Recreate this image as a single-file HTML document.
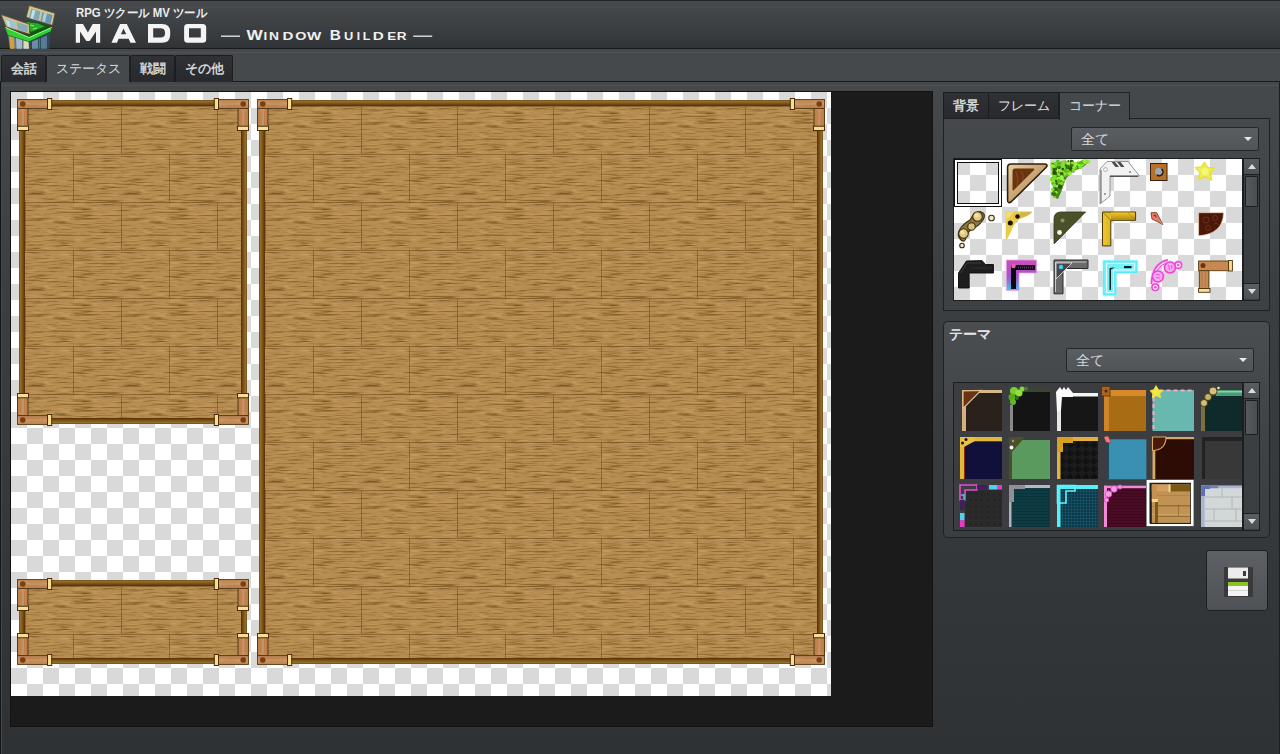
<!DOCTYPE html>
<html><head><meta charset="utf-8">
<style>
*{box-sizing:border-box}
html,body{margin:0;padding:0}
body{width:1280px;height:754px;overflow:hidden;position:relative;background:#2f3235;font-family:"Liberation Sans",sans-serif}
.abs{position:absolute}
#header{left:0;top:0;width:1280px;height:49px;background:linear-gradient(#46494c 0px,#45484b 5px,#4a4d50 6px,#44474a 8px,#3f4245 20px,#36393c 38px,#303336 47px);border-top:1px solid #222426;border-bottom:1px solid #17191b}
#tabbar{left:0;top:49px;width:1280px;height:33px;background:#46494c;border-bottom:1px solid #1a1c1e}
#tabbar:before{content:"";position:absolute;left:0;top:3px;width:100%;height:1px;background:#505357}
.tab{position:absolute;top:6px;height:27px;background:linear-gradient(#2f3134,#27292c);border:1px solid #1b1d1f;border-bottom:none;color:#d0d2d4;font-size:13px;font-weight:bold;line-height:25px;text-align:center;border-radius:2px 2px 0 0}
.tab.act{background:#46494c;color:#d8dadc;height:28px;border-color:#1f2123;font-weight:normal}
#body{left:0;top:82px;width:1280px;height:672px;background:linear-gradient(#46494c 0px,#3c3f42 200px,#313437 600px,#2f3235 672px);border-left:1px solid #141719;border-right:1px solid #1d1f21;box-shadow:inset 1px 0 0 #45484b}
#canvas{left:10px;top:91px;width:923px;height:636px;background:#1b1b1b;border:1px solid #121212}
#img{left:11px;top:92px;width:820px;height:604px}
.ptab{position:absolute;top:92px;height:27px;background:linear-gradient(#2f3134,#27292c);border:1px solid #1b1d1f;border-bottom:none;color:#d4d6d8;font-size:13px;line-height:25px;text-align:center;font-weight:bold}
.ptab.act{background:#46494c;height:27px;font-weight:normal;color:#e0e2e4}
#cbox{left:943px;top:118px;width:327px;height:193px;background:linear-gradient(#46494c,#3e4144);border:1px solid #1e2022}
#tbox{left:943px;top:321px;width:327px;height:217px;background:linear-gradient(#4b4e51,#3f4245 60%,#3b3e41);border:1px solid #1e2022;border-radius:5px}
.dd{position:absolute;height:24px;background:linear-gradient(#5a5e62,#505457);border:1px solid #24262a;border-radius:2px;color:#d6d8da;font-size:14px;line-height:22px;padding-left:9px}
.dd:after{content:"";position:absolute;right:6px;top:9px;border-left:4px solid transparent;border-right:4px solid transparent;border-top:4px solid #e8e8e8}
.sb{position:absolute;width:17px;background:#3c3f42;border:1px solid #1c1e20}
.sbb{position:absolute;left:0;width:15px;height:16px;background:linear-gradient(#5a5e62,#4c5054);border-bottom:1px solid #1c1e20}
.sbb.up:after{content:"";position:absolute;left:4px;top:5px;border-left:4px solid transparent;border-right:4px solid transparent;border-bottom:5px solid #dcdcdc}
.sbb.dn{border-top:1px solid #1c1e20;border-bottom:none}
.sbb.dn:after{content:"";position:absolute;left:4px;top:5px;border-left:4px solid transparent;border-right:4px solid transparent;border-top:5px solid #dcdcdc}
.thumb{position:absolute;left:1px;width:13px;background:linear-gradient(90deg,#55595c,#4a4e51);border:1px solid #1c1e20;border-radius:1px}
#save{left:1206px;top:550px;width:62px;height:61px;background:linear-gradient(#5d6165,#4e5256);border:1px solid #1d1f21;border-radius:3px}
</style></head>
<body>
<div id="header" class="abs"><svg class="abs" style="left:0;top:0" width="60" height="49" viewBox="0 0 60 49">
<polygon points="29.2,4.6 55,12.3 52.4,24.2 26.2,16.2" fill="#d8c890" stroke="#5a4a20" stroke-width="0.7"/>
<polygon points="31.2,7.6 40.5,10.3 38.6,20 29,17" fill="#7ea8b8"/>
<polygon points="42.3,10.9 52.6,14 50.6,23 40.4,20.4" fill="#6a98b0"/>
<polygon points="32.5,8.5 35.5,9.5 33,18 30.5,17.2" fill="#e0f0f8" opacity="0.75"/>
<polygon points="44,11.5 47,12.5 45,21 42,20.2" fill="#e0f0f8" opacity="0.6"/>
<polygon points="22,20 41,22 51.7,26.5 29,36" fill="#0e5a10"/>
<polygon points="26,21 38,22.5 45,25.5 31,31" fill="#2aa82a"/>
<path d="M30,24 L34,25 M33,28 L37,27" stroke="#8af07a" stroke-width="1"/>
<polygon points="1,13.6 29.2,23.2 29.8,33.2 6.3,25.9" fill="#d4c08c" stroke="#5a4a20" stroke-width="0.7"/>
<polygon points="4.5,17 15,20.5 16,28.5 7.5,25.5" fill="#a0c4d0"/>
<polygon points="16.5,21 27.5,24.5 28,31.5 17.8,28.8" fill="#88acbc"/>
<polygon points="6,19 9,20 10.5,25.5 8,25" fill="#e8f4f8" opacity="0.6"/>
<polygon points="5.3,26.5 29,36.5 51.7,26.5 50.4,31 29,41 8,34.5" fill="#34d030"/>
<path d="M5.3,26.5 L29,36.5 L51.7,26.5" stroke="#a0ff90" stroke-width="1" fill="none"/>
<path d="M8,34.5 L29,41 L50.4,31" stroke="#0a6a10" stroke-width="1.2" fill="none"/>
<polygon points="8,34.5 29,41 29.8,47.7 10,47.7" fill="#5a7a8a"/>
<polygon points="9,35 14,36.5 14.6,47.7 10,47.7" fill="#d0a040"/>
<polygon points="16,37 22,39 22,47.7 16.5,47.7" fill="#a0b8c8"/>
<polygon points="23.5,39.5 28.5,41 29,47.7 23.5,47.7" fill="#e0d8b0"/>
<polygon points="29,41 50.4,31 49.7,47.7 29.8,47.7" fill="#2a4a5a"/>
<polygon points="32,40.5 38,38 38,47.7 32,47.7" fill="#6a8aa8"/>
<polygon points="41,37 47,34.5 46.8,47.7 41,47.7" fill="#5a7a98"/>
<path d="M39.5,37.5 L39.5,47.7" stroke="#20a030" stroke-width="1.2"/>
</svg><div class="abs" style="left:76px;top:4px;color:#ececec;font-size:12px;font-weight:bold;line-height:16px;white-space:nowrap;transform:scaleX(0.95);transform-origin:0 0">RPG ツクール MV ツール</div>
<svg class="abs" style="left:0;top:0" width="460" height="48">
<path fill="#f4f4f4" fill-rule="evenodd" d="M75.8,41.8 L75.8,22.9 L83,22.9 L87.9,31.6 L92.7,22.9 L100.2,22.9 L100.2,41.8 L96,41.8 L96,30.4 L89.6,40 L86.3,40 L80,30.4 L80,41.8 Z
M111.4,41.8 L120.1,22.9 L126.8,22.9 L136,41.8 L130.4,41.8 L128.6,37.8 L118.6,37.8 L117,41.8 Z M120.9,33.2 L126.3,33.2 L123.5,27.6 Z
M148,22.9 L162,22.9 Q170.2,22.9 170.2,31 L170.2,33.7 Q170.2,41.8 162,41.8 L148,41.8 Z M153.2,27.3 L160.5,27.3 Q165,27.3 165,31.6 L165,32.3 Q165,36.6 160.5,36.6 L153.2,36.6 Z
M187.6,22.9 L202.7,22.9 Q206.2,22.9 206.2,26.4 L206.2,38.3 Q206.2,41.8 202.7,41.8 L187.6,41.8 Q184.1,41.8 184.1,38.3 L184.1,26.4 Q184.1,22.9 187.6,22.9 Z M189,27.3 L189,36.6 L200.8,36.6 L200.8,27.3 Z"/>
<rect x="221" y="34.5" width="19" height="1.4" fill="#e0e0e0"/>
<rect x="413.2" y="34.5" width="19" height="1.4" fill="#e0e0e0"/>
<g fill="#f0f0f0" font-family="Liberation Sans" font-weight="bold"><text x="246.5" y="38.9" font-size="13.8" textLength="16.2" lengthAdjust="spacingAndGlyphs">W</text><text x="263.4" y="38.9" font-size="11.4" textLength="3.7" lengthAdjust="spacingAndGlyphs">I</text><text x="269.0" y="38.9" font-size="11.4" textLength="10.0" lengthAdjust="spacingAndGlyphs">N</text><text x="282.4" y="38.9" font-size="11.4" textLength="10.9" lengthAdjust="spacingAndGlyphs">D</text><text x="295.3" y="38.9" font-size="11.4" textLength="11.2" lengthAdjust="spacingAndGlyphs">O</text><text x="307.1" y="38.9" font-size="11.4" textLength="14.3" lengthAdjust="spacingAndGlyphs">W</text><text x="329.7" y="38.9" font-size="13.8" textLength="11.1" lengthAdjust="spacingAndGlyphs">B</text><text x="343.9" y="38.9" font-size="11.4" textLength="9.3" lengthAdjust="spacingAndGlyphs">U</text><text x="356.8" y="38.9" font-size="11.4" textLength="3.3" lengthAdjust="spacingAndGlyphs">I</text><text x="362.8" y="38.9" font-size="11.4" textLength="7.6" lengthAdjust="spacingAndGlyphs">L</text><text x="372.7" y="38.9" font-size="11.4" textLength="11.0" lengthAdjust="spacingAndGlyphs">D</text><text x="387.3" y="38.9" font-size="11.4" textLength="8.9" lengthAdjust="spacingAndGlyphs">E</text><text x="396.7" y="38.9" font-size="11.4" textLength="9.8" lengthAdjust="spacingAndGlyphs">R</text></g>
</svg></div>
<div id="tabbar" class="abs">
 <div class="tab" style="left:1px;width:45px">会話</div>
 <div class="tab act" style="left:46px;width:84px">ステータス</div>
 <div class="tab" style="left:130px;width:45px">戦闘</div>
 <div class="tab" style="left:175px;width:58px">その他</div>
</div>
<div id="body" class="abs"></div>
<div class="abs" style="left:2px;top:85px;width:1276px;height:1px;background:#4e5154"></div>
<div id="canvas" class="abs"></div>
<div id="img" class="abs"><svg width="820" height="604" style="position:absolute;left:0;top:0">
<defs>
<filter id="grain" x="0" y="0" width="96" height="96" filterUnits="userSpaceOnUse" color-interpolation-filters="sRGB">
<feTurbulence type="fractalNoise" baseFrequency="0.04 0.6" numOctaves="3" seed="11" stitchTiles="stitch"/>
<feColorMatrix type="matrix" values="0 0 0 0 0.45  0 0 0 0 0.32  0 0 0 0 0.12  -2.4 0 0 0 1.22"/>
</filter>
<filter id="grain2" x="0" y="0" width="96" height="96" filterUnits="userSpaceOnUse" color-interpolation-filters="sRGB">
<feTurbulence type="fractalNoise" baseFrequency="0.06 0.5" numOctaves="2" seed="4" stitchTiles="stitch"/>
<feColorMatrix type="matrix" values="0 0 0 0 0.82  0 0 0 0 0.64  0 0 0 0 0.38  2.2 0 0 0 -1.15"/>
</filter>
<pattern id="chk" width="32" height="32" patternUnits="userSpaceOnUse">
<rect width="32" height="32" fill="#fff"/><rect width="16" height="16" fill="#d9d9d9"/><rect x="16" y="16" width="16" height="16" fill="#d9d9d9"/>
</pattern>
<pattern id="woodA" width="96" height="96" patternUnits="userSpaceOnUse" x="14" y="14"><rect width="96" height="96" fill="#b58c51"/><rect width="96" height="96" filter="url(#grain)"/><rect width="96" height="96" filter="url(#grain2)"/><rect x="0" y="0" width="96" height="1" fill="#5a3c14" opacity="0.42"/><rect x="0" y="48" width="96" height="1" fill="#5a3c14" opacity="0.42"/><rect x="0" y="0" width="1" height="48" fill="#5a3c14" opacity="0.42"/><rect x="48" y="48" width="1" height="48" fill="#5a3c14" opacity="0.42"/></pattern>
<pattern id="woodC" width="96" height="96" patternUnits="userSpaceOnUse" x="254" y="14"><rect width="96" height="96" fill="#b58c51"/><rect width="96" height="96" filter="url(#grain)"/><rect width="96" height="96" filter="url(#grain2)"/><rect x="0" y="0" width="96" height="1" fill="#5a3c14" opacity="0.42"/><rect x="0" y="48" width="96" height="1" fill="#5a3c14" opacity="0.42"/><rect x="0" y="0" width="1" height="48" fill="#5a3c14" opacity="0.42"/><rect x="48" y="48" width="1" height="48" fill="#5a3c14" opacity="0.42"/></pattern>
<linearGradient id="lineH" x1="0" y1="0" x2="0" y2="1">
<stop offset="0" stop-color="#6a4a14"/><stop offset="0.2" stop-color="#94702c"/><stop offset="0.55" stop-color="#80561a"/><stop offset="1" stop-color="#5a2e02"/></linearGradient>
<linearGradient id="lineHb" x1="0" y1="1" x2="0" y2="0">
<stop offset="0" stop-color="#6a4a14"/><stop offset="0.2" stop-color="#94702c"/><stop offset="0.55" stop-color="#80561a"/><stop offset="1" stop-color="#5a2e02"/></linearGradient>
<linearGradient id="lineV" x1="0" y1="0" x2="1" y2="0">
<stop offset="0" stop-color="#6a4a14"/><stop offset="0.2" stop-color="#94702c"/><stop offset="0.55" stop-color="#80561a"/><stop offset="1" stop-color="#5a2e02"/></linearGradient>
<linearGradient id="lineVr" x1="1" y1="0" x2="0" y2="0">
<stop offset="0" stop-color="#6a4a14"/><stop offset="0.2" stop-color="#94702c"/><stop offset="0.55" stop-color="#80561a"/><stop offset="1" stop-color="#5a2e02"/></linearGradient>
<linearGradient id="cbarH" x1="0" y1="0" x2="0" y2="1">
<stop offset="0" stop-color="#b88048"/><stop offset="0.45" stop-color="#cc9866"/><stop offset="1" stop-color="#b07848"/></linearGradient>
<linearGradient id="cbarV" x1="0" y1="0" x2="1" y2="0">
<stop offset="0" stop-color="#b47844"/><stop offset="0.5" stop-color="#cc9464"/><stop offset="1" stop-color="#b47844"/></linearGradient>
</defs>
<rect width="820" height="604" fill="url(#chk)"/>
<rect x="9" y="10" width="226" height="320" fill="url(#woodA)"/><rect x="40" y="8" width="164" height="6" fill="url(#lineH)"/><rect x="40" y="326" width="164" height="6" fill="url(#lineHb)"/><rect x="8" y="38" width="6" height="264" fill="url(#lineV)"/><rect x="230" y="38" width="6" height="264" fill="url(#lineVr)"/><g transform="translate(6,7) scale(1,1)">
<rect x="0.5" y="0.5" width="30.5" height="9" fill="url(#cbarH)" stroke="#5a3c16" stroke-width="0.9"/>
<rect x="0.5" y="9.5" width="10.5" height="18" fill="url(#cbarV)" stroke="#5c3a12" stroke-width="1"/>
<path d="M4,13 L4,26 M7.5,12 L7.5,26" stroke="#b07040" stroke-width="0.8" opacity="0.6"/><path d="M13,4 L26,4 M10,6.5 L22,6.5" stroke="#b07040" stroke-width="0.7" opacity="0.5"/><circle cx="5.8" cy="5" r="2.8" fill="#7a3c10"/>
<rect x="30.5" y="-0.5" width="4.2" height="11" fill="#f6dc94" stroke="#4a3008" stroke-width="1"/>
<rect x="0.5" y="27.2" width="11" height="4.3" fill="#f6dc94" stroke="#4a3008" stroke-width="1"/>
</g><g transform="translate(238,7) scale(-1,1)">
<rect x="0.5" y="0.5" width="30.5" height="9" fill="url(#cbarH)" stroke="#5a3c16" stroke-width="0.9"/>
<rect x="0.5" y="9.5" width="10.5" height="18" fill="url(#cbarV)" stroke="#5c3a12" stroke-width="1"/>
<path d="M4,13 L4,26 M7.5,12 L7.5,26" stroke="#b07040" stroke-width="0.8" opacity="0.6"/><path d="M13,4 L26,4 M10,6.5 L22,6.5" stroke="#b07040" stroke-width="0.7" opacity="0.5"/><circle cx="5.8" cy="5" r="2.8" fill="#7a3c10"/>
<rect x="30.5" y="-0.5" width="4.2" height="11" fill="#f6dc94" stroke="#4a3008" stroke-width="1"/>
<rect x="0.5" y="27.2" width="11" height="4.3" fill="#f6dc94" stroke="#4a3008" stroke-width="1"/>
</g><g transform="translate(6,333) scale(1,-1)">
<rect x="0.5" y="0.5" width="30.5" height="9" fill="url(#cbarH)" stroke="#5a3c16" stroke-width="0.9"/>
<rect x="0.5" y="9.5" width="10.5" height="18" fill="url(#cbarV)" stroke="#5c3a12" stroke-width="1"/>
<path d="M4,13 L4,26 M7.5,12 L7.5,26" stroke="#b07040" stroke-width="0.8" opacity="0.6"/><path d="M13,4 L26,4 M10,6.5 L22,6.5" stroke="#b07040" stroke-width="0.7" opacity="0.5"/><circle cx="5.8" cy="5" r="2.8" fill="#7a3c10"/>
<rect x="30.5" y="-0.5" width="4.2" height="11" fill="#f6dc94" stroke="#4a3008" stroke-width="1"/>
<rect x="0.5" y="27.2" width="11" height="4.3" fill="#f6dc94" stroke="#4a3008" stroke-width="1"/>
</g><g transform="translate(238,333) scale(-1,-1)">
<rect x="0.5" y="0.5" width="30.5" height="9" fill="url(#cbarH)" stroke="#5a3c16" stroke-width="0.9"/>
<rect x="0.5" y="9.5" width="10.5" height="18" fill="url(#cbarV)" stroke="#5c3a12" stroke-width="1"/>
<path d="M4,13 L4,26 M7.5,12 L7.5,26" stroke="#b07040" stroke-width="0.8" opacity="0.6"/><path d="M13,4 L26,4 M10,6.5 L22,6.5" stroke="#b07040" stroke-width="0.7" opacity="0.5"/><circle cx="5.8" cy="5" r="2.8" fill="#7a3c10"/>
<rect x="30.5" y="-0.5" width="4.2" height="11" fill="#f6dc94" stroke="#4a3008" stroke-width="1"/>
<rect x="0.5" y="27.2" width="11" height="4.3" fill="#f6dc94" stroke="#4a3008" stroke-width="1"/>
</g>
<rect x="9" y="490" width="226" height="80" fill="url(#woodA)"/><rect x="40" y="488" width="164" height="6" fill="url(#lineH)"/><rect x="40" y="566" width="164" height="6" fill="url(#lineHb)"/><rect x="8" y="518" width="6" height="24" fill="url(#lineV)"/><rect x="230" y="518" width="6" height="24" fill="url(#lineVr)"/><g transform="translate(6,487) scale(1,1)">
<rect x="0.5" y="0.5" width="30.5" height="9" fill="url(#cbarH)" stroke="#5a3c16" stroke-width="0.9"/>
<rect x="0.5" y="9.5" width="10.5" height="18" fill="url(#cbarV)" stroke="#5c3a12" stroke-width="1"/>
<path d="M4,13 L4,26 M7.5,12 L7.5,26" stroke="#b07040" stroke-width="0.8" opacity="0.6"/><path d="M13,4 L26,4 M10,6.5 L22,6.5" stroke="#b07040" stroke-width="0.7" opacity="0.5"/><circle cx="5.8" cy="5" r="2.8" fill="#7a3c10"/>
<rect x="30.5" y="-0.5" width="4.2" height="11" fill="#f6dc94" stroke="#4a3008" stroke-width="1"/>
<rect x="0.5" y="27.2" width="11" height="4.3" fill="#f6dc94" stroke="#4a3008" stroke-width="1"/>
</g><g transform="translate(238,487) scale(-1,1)">
<rect x="0.5" y="0.5" width="30.5" height="9" fill="url(#cbarH)" stroke="#5a3c16" stroke-width="0.9"/>
<rect x="0.5" y="9.5" width="10.5" height="18" fill="url(#cbarV)" stroke="#5c3a12" stroke-width="1"/>
<path d="M4,13 L4,26 M7.5,12 L7.5,26" stroke="#b07040" stroke-width="0.8" opacity="0.6"/><path d="M13,4 L26,4 M10,6.5 L22,6.5" stroke="#b07040" stroke-width="0.7" opacity="0.5"/><circle cx="5.8" cy="5" r="2.8" fill="#7a3c10"/>
<rect x="30.5" y="-0.5" width="4.2" height="11" fill="#f6dc94" stroke="#4a3008" stroke-width="1"/>
<rect x="0.5" y="27.2" width="11" height="4.3" fill="#f6dc94" stroke="#4a3008" stroke-width="1"/>
</g><g transform="translate(6,573) scale(1,-1)">
<rect x="0.5" y="0.5" width="30.5" height="9" fill="url(#cbarH)" stroke="#5a3c16" stroke-width="0.9"/>
<rect x="0.5" y="9.5" width="10.5" height="18" fill="url(#cbarV)" stroke="#5c3a12" stroke-width="1"/>
<path d="M4,13 L4,26 M7.5,12 L7.5,26" stroke="#b07040" stroke-width="0.8" opacity="0.6"/><path d="M13,4 L26,4 M10,6.5 L22,6.5" stroke="#b07040" stroke-width="0.7" opacity="0.5"/><circle cx="5.8" cy="5" r="2.8" fill="#7a3c10"/>
<rect x="30.5" y="-0.5" width="4.2" height="11" fill="#f6dc94" stroke="#4a3008" stroke-width="1"/>
<rect x="0.5" y="27.2" width="11" height="4.3" fill="#f6dc94" stroke="#4a3008" stroke-width="1"/>
</g><g transform="translate(238,573) scale(-1,-1)">
<rect x="0.5" y="0.5" width="30.5" height="9" fill="url(#cbarH)" stroke="#5a3c16" stroke-width="0.9"/>
<rect x="0.5" y="9.5" width="10.5" height="18" fill="url(#cbarV)" stroke="#5c3a12" stroke-width="1"/>
<path d="M4,13 L4,26 M7.5,12 L7.5,26" stroke="#b07040" stroke-width="0.8" opacity="0.6"/><path d="M13,4 L26,4 M10,6.5 L22,6.5" stroke="#b07040" stroke-width="0.7" opacity="0.5"/><circle cx="5.8" cy="5" r="2.8" fill="#7a3c10"/>
<rect x="30.5" y="-0.5" width="4.2" height="11" fill="#f6dc94" stroke="#4a3008" stroke-width="1"/>
<rect x="0.5" y="27.2" width="11" height="4.3" fill="#f6dc94" stroke="#4a3008" stroke-width="1"/>
</g>
<rect x="249" y="10" width="562" height="560" fill="url(#woodC)"/><rect x="280" y="8" width="500" height="6" fill="url(#lineH)"/><rect x="280" y="566" width="500" height="6" fill="url(#lineHb)"/><rect x="248" y="38" width="6" height="504" fill="url(#lineV)"/><rect x="806" y="38" width="6" height="504" fill="url(#lineVr)"/><g transform="translate(246,7) scale(1,1)">
<rect x="0.5" y="0.5" width="30.5" height="9" fill="url(#cbarH)" stroke="#5a3c16" stroke-width="0.9"/>
<rect x="0.5" y="9.5" width="10.5" height="18" fill="url(#cbarV)" stroke="#5c3a12" stroke-width="1"/>
<path d="M4,13 L4,26 M7.5,12 L7.5,26" stroke="#b07040" stroke-width="0.8" opacity="0.6"/><path d="M13,4 L26,4 M10,6.5 L22,6.5" stroke="#b07040" stroke-width="0.7" opacity="0.5"/><circle cx="5.8" cy="5" r="2.8" fill="#7a3c10"/>
<rect x="30.5" y="-0.5" width="4.2" height="11" fill="#f6dc94" stroke="#4a3008" stroke-width="1"/>
<rect x="0.5" y="27.2" width="11" height="4.3" fill="#f6dc94" stroke="#4a3008" stroke-width="1"/>
</g><g transform="translate(814,7) scale(-1,1)">
<rect x="0.5" y="0.5" width="30.5" height="9" fill="url(#cbarH)" stroke="#5a3c16" stroke-width="0.9"/>
<rect x="0.5" y="9.5" width="10.5" height="18" fill="url(#cbarV)" stroke="#5c3a12" stroke-width="1"/>
<path d="M4,13 L4,26 M7.5,12 L7.5,26" stroke="#b07040" stroke-width="0.8" opacity="0.6"/><path d="M13,4 L26,4 M10,6.5 L22,6.5" stroke="#b07040" stroke-width="0.7" opacity="0.5"/><circle cx="5.8" cy="5" r="2.8" fill="#7a3c10"/>
<rect x="30.5" y="-0.5" width="4.2" height="11" fill="#f6dc94" stroke="#4a3008" stroke-width="1"/>
<rect x="0.5" y="27.2" width="11" height="4.3" fill="#f6dc94" stroke="#4a3008" stroke-width="1"/>
</g><g transform="translate(246,573) scale(1,-1)">
<rect x="0.5" y="0.5" width="30.5" height="9" fill="url(#cbarH)" stroke="#5a3c16" stroke-width="0.9"/>
<rect x="0.5" y="9.5" width="10.5" height="18" fill="url(#cbarV)" stroke="#5c3a12" stroke-width="1"/>
<path d="M4,13 L4,26 M7.5,12 L7.5,26" stroke="#b07040" stroke-width="0.8" opacity="0.6"/><path d="M13,4 L26,4 M10,6.5 L22,6.5" stroke="#b07040" stroke-width="0.7" opacity="0.5"/><circle cx="5.8" cy="5" r="2.8" fill="#7a3c10"/>
<rect x="30.5" y="-0.5" width="4.2" height="11" fill="#f6dc94" stroke="#4a3008" stroke-width="1"/>
<rect x="0.5" y="27.2" width="11" height="4.3" fill="#f6dc94" stroke="#4a3008" stroke-width="1"/>
</g><g transform="translate(814,573) scale(-1,-1)">
<rect x="0.5" y="0.5" width="30.5" height="9" fill="url(#cbarH)" stroke="#5a3c16" stroke-width="0.9"/>
<rect x="0.5" y="9.5" width="10.5" height="18" fill="url(#cbarV)" stroke="#5c3a12" stroke-width="1"/>
<path d="M4,13 L4,26 M7.5,12 L7.5,26" stroke="#b07040" stroke-width="0.8" opacity="0.6"/><path d="M13,4 L26,4 M10,6.5 L22,6.5" stroke="#b07040" stroke-width="0.7" opacity="0.5"/><circle cx="5.8" cy="5" r="2.8" fill="#7a3c10"/>
<rect x="30.5" y="-0.5" width="4.2" height="11" fill="#f6dc94" stroke="#4a3008" stroke-width="1"/>
<rect x="0.5" y="27.2" width="11" height="4.3" fill="#f6dc94" stroke="#4a3008" stroke-width="1"/>
</g>
</svg></div>

<div class="ptab" style="left:943px;width:46px">背景</div>
<div class="ptab" style="left:988px;width:71px;font-weight:normal;color:#e2e4e6">フレーム</div>
<div id="cbox" class="abs"></div>
<div class="ptab act" style="left:1059px;width:71px;height:28px;border-color:#1f2123">コーナー</div>
<div class="dd" style="left:1071px;top:127px;width:188px">全て</div>
<div class="abs" style="left:953px;top:158px;width:290px;height:143px;background:#fff;border:1px solid #1c1e20;overflow:hidden"><svg width="288" height="141" style="position:absolute;left:0;top:0"><defs><pattern id="chk2" width="32" height="32" patternUnits="userSpaceOnUse"><rect width="32" height="32" fill="#fff"/><rect width="16" height="16" fill="#d9d9d9"/><rect x="16" y="16" width="16" height="16" fill="#d9d9d9"/></pattern></defs><rect width="288" height="141" fill="url(#chk2)"/><g transform="translate(0,0)"><rect x="0.5" y="0.5" width="47" height="47" fill="none" stroke="#111" stroke-width="1"/><rect x="2" y="2" width="44" height="44" fill="none" stroke="#fff" stroke-width="2"/><rect x="3.5" y="3.5" width="41" height="41" fill="none" stroke="#111" stroke-width="1"/></g><g transform="translate(48,0)"><defs><linearGradient id="brz" x1="0" y1="0" x2="1" y2="1"><stop offset="0" stop-color="#e8d0a0"/><stop offset="0.5" stop-color="#c8a470"/><stop offset="1" stop-color="#8a6a3a"/></linearGradient></defs><path d="M9,5 L43,5 Q46.5,5.5 44,8.5 L9.5,42.5 Q5.6,45.5 5.6,41 L5.6,8.5 Q5.6,5 9,5 Z" fill="url(#brz)" stroke="#2e200c" stroke-width="1.6"/><path d="M13,9.5 L31,9.5 Q33.5,9.5 31.5,11.5 L12.5,30.5 Q10.5,32.5 10.5,30 L10.5,12 Q10.5,9.5 13,9.5 Z" fill="#6a3410"/><path d="M14,13 q3,6 1,14 M19,12 q3,4 2,9" stroke="#8a4a20" stroke-width="1" fill="none"/></g><g transform="translate(96,0)"><path d="M3,3 L38,3 Q34,9 26,11 Q18,15 15,22 Q12,32 8,40 L3,38 Z" fill="#4a8a18"/><circle cx="10.7" cy="12.3" r="2.2" fill="#7ae028"/><circle cx="8.7" cy="6.9" r="1.0" fill="#98f038"/><circle cx="6.8" cy="12.3" r="1.7" fill="#3a7010"/><circle cx="2.6" cy="6.8" r="2.2" fill="#86e030"/><circle cx="8.7" cy="19.5" r="1.8" fill="#98f038"/><circle cx="38.4" cy="2.6" r="2.0" fill="#98f038"/><circle cx="4.9" cy="30.4" r="1.7" fill="#3a7010"/><circle cx="36.4" cy="2.7" r="2.3" fill="#86e030"/><circle cx="14.5" cy="9.9" r="1.1" fill="#5ab820"/><circle cx="17.4" cy="9.3" r="1.7" fill="#2a5008"/><circle cx="4.8" cy="9.8" r="1.9" fill="#98f038"/><circle cx="23.8" cy="8.5" r="2.3" fill="#7ae028"/><circle cx="4.1" cy="16.1" r="1.7" fill="#86e030"/><circle cx="17.4" cy="14.7" r="1.0" fill="#98f038"/><circle cx="17.8" cy="3.0" r="1.2" fill="#6ac820"/><circle cx="10.0" cy="16.2" r="2.0" fill="#5ab820"/><circle cx="19.2" cy="6.8" r="1.3" fill="#86e030"/><circle cx="4.3" cy="22.0" r="1.8" fill="#98f038"/><circle cx="17.2" cy="5.0" r="1.3" fill="#2a5008"/><circle cx="18.0" cy="10.0" r="1.9" fill="#a8f050"/><circle cx="2.1" cy="20.4" r="2.3" fill="#86e030"/><circle cx="3.3" cy="18.3" r="1.3" fill="#86e030"/><circle cx="21.7" cy="2.8" r="2.0" fill="#2a5008"/><circle cx="21.4" cy="7.2" r="2.2" fill="#86e030"/><circle cx="6.5" cy="11.6" r="2.1" fill="#a8f050"/><circle cx="21.8" cy="5.1" r="1.1" fill="#6ac820"/><circle cx="3.7" cy="8.8" r="1.3" fill="#6ac820"/><circle cx="19.0" cy="5.2" r="2.3" fill="#98f038"/><circle cx="17.7" cy="13.0" r="1.0" fill="#a8f050"/><circle cx="13.2" cy="20.1" r="1.0" fill="#2a5008"/><circle cx="9.1" cy="15.4" r="1.4" fill="#a8f050"/><circle cx="5.8" cy="31.4" r="1.9" fill="#2a5008"/><circle cx="16.7" cy="11.2" r="1.7" fill="#a8f050"/><circle cx="15.7" cy="8.0" r="1.6" fill="#2a5008"/><circle cx="10.0" cy="27.8" r="2.1" fill="#2a5008"/><circle cx="3.8" cy="35.1" r="1.5" fill="#2a5008"/><circle cx="3.0" cy="21.3" r="1.1" fill="#2a5008"/><circle cx="3.4" cy="22.9" r="1.9" fill="#86e030"/><circle cx="6.0" cy="33.2" r="1.8" fill="#86e030"/><circle cx="9.0" cy="24.1" r="1.3" fill="#7ae028"/><circle cx="6.5" cy="25.5" r="1.2" fill="#98f038"/><circle cx="28.5" cy="2.9" r="1.2" fill="#7ae028"/><circle cx="4.5" cy="37.6" r="1.6" fill="#7ae028"/><circle cx="11.6" cy="16.0" r="1.0" fill="#3a7010"/><circle cx="34.0" cy="4.1" r="1.5" fill="#a8f050"/><circle cx="5.3" cy="7.3" r="1.7" fill="#7ae028"/><circle cx="25.1" cy="8.6" r="1.6" fill="#a8f050"/><circle cx="3.8" cy="6.0" r="2.0" fill="#2a5008"/><circle cx="21.6" cy="5.4" r="1.6" fill="#3a7010"/><circle cx="3.3" cy="10.6" r="2.2" fill="#7ae028"/><circle cx="10.8" cy="15.0" r="1.7" fill="#2a5008"/><circle cx="17.6" cy="4.4" r="1.5" fill="#3a7010"/><circle cx="13.4" cy="21.2" r="1.4" fill="#98f038"/><circle cx="15.8" cy="12.4" r="1.6" fill="#86e030"/><circle cx="2.8" cy="22.8" r="2.2" fill="#98f038"/><circle cx="13.0" cy="6.9" r="1.5" fill="#a8f050"/><circle cx="3.7" cy="5.0" r="1.6" fill="#a8f050"/><circle cx="12.2" cy="12.4" r="1.6" fill="#98f038"/><circle cx="13.7" cy="17.7" r="2.3" fill="#5ab820"/><circle cx="2.7" cy="4.8" r="1.9" fill="#a8f050"/><circle cx="32.7" cy="2.6" r="1.9" fill="#98f038"/><circle cx="3.5" cy="7.6" r="2.2" fill="#3a7010"/><circle cx="2.6" cy="19.1" r="1.7" fill="#6ac820"/><circle cx="7.9" cy="5.5" r="1.9" fill="#3a7010"/><circle cx="4.3" cy="23.4" r="1.3" fill="#7ae028"/><circle cx="14.8" cy="14.5" r="2.0" fill="#a8f050"/><circle cx="5.3" cy="21.1" r="1.6" fill="#2a5008"/><circle cx="14.4" cy="19.0" r="1.0" fill="#3a7010"/><circle cx="13.2" cy="3.9" r="2.2" fill="#2a5008"/><circle cx="8.4" cy="2.9" r="1.9" fill="#7ae028"/><circle cx="4.8" cy="6.9" r="2.1" fill="#5ab820"/><circle cx="31.9" cy="5.0" r="2.2" fill="#98f038"/><circle cx="6.2" cy="9.4" r="1.0" fill="#3a7010"/><circle cx="3.8" cy="4.4" r="1.0" fill="#7ae028"/><circle cx="26.0" cy="4.6" r="1.8" fill="#7ae028"/><circle cx="12.0" cy="14.6" r="1.6" fill="#2a5008"/><circle cx="5.6" cy="21.0" r="1.7" fill="#a8f050"/><circle cx="4.1" cy="19.8" r="1.3" fill="#3a7010"/><circle cx="19.2" cy="12.0" r="1.1" fill="#3a7010"/><circle cx="7.7" cy="14.0" r="1.1" fill="#7ae028"/><circle cx="17.1" cy="5.4" r="1.0" fill="#5ab820"/><circle cx="23.3" cy="12.0" r="1.5" fill="#2a5008"/><circle cx="4.5" cy="23.2" r="1.4" fill="#98f038"/><circle cx="3.3" cy="24.8" r="1.9" fill="#5ab820"/><circle cx="2.6" cy="15.4" r="1.1" fill="#86e030"/><circle cx="16.9" cy="7.2" r="1.8" fill="#2a5008"/><circle cx="6.7" cy="26.9" r="1.4" fill="#a8f050"/><circle cx="6.5" cy="24.7" r="1.6" fill="#3a7010"/><circle cx="12.9" cy="15.3" r="0.9" fill="#3a7010"/><circle cx="6.5" cy="21.6" r="1.8" fill="#2a5008"/><circle cx="2.0" cy="20.8" r="1.8" fill="#86e030"/><circle cx="15.6" cy="12.2" r="1.8" fill="#5ab820"/><circle cx="10.7" cy="17.4" r="1.1" fill="#a8f050"/><circle cx="4.5" cy="34.7" r="1.8" fill="#7ae028"/><circle cx="13.1" cy="3.3" r="1.4" fill="#7ae028"/><circle cx="15.1" cy="9.2" r="2.2" fill="#5ab820"/><circle cx="11.0" cy="16.9" r="1.2" fill="#98f038"/><circle cx="2.8" cy="30.6" r="1.8" fill="#86e030"/><circle cx="4.0" cy="13.7" r="1.2" fill="#2a5008"/><circle cx="18.6" cy="12.7" r="1.1" fill="#3a7010"/><circle cx="9.4" cy="6.6" r="1.8" fill="#a8f050"/><circle cx="2.1" cy="4.4" r="1.5" fill="#7ae028"/><circle cx="2.8" cy="35.4" r="1.7" fill="#5ab820"/><circle cx="18.6" cy="11.5" r="1.0" fill="#6ac820"/><circle cx="4.3" cy="7.4" r="1.5" fill="#7ae028"/><circle cx="4.0" cy="20.3" r="1.8" fill="#7ae028"/><circle cx="3.2" cy="34.2" r="1.8" fill="#3a7010"/><circle cx="24.3" cy="3.9" r="1.1" fill="#98f038"/><circle cx="18.9" cy="5.2" r="0.9" fill="#2a5008"/><circle cx="23.6" cy="11.4" r="1.8" fill="#7ae028"/><circle cx="5.7" cy="17.2" r="2.1" fill="#3a7010"/><circle cx="25.3" cy="5.1" r="2.0" fill="#a8f050"/><circle cx="9.6" cy="17.1" r="1.0" fill="#3a7010"/><circle cx="9.0" cy="10.0" r="1.8" fill="#a8f050"/><circle cx="4.6" cy="17.4" r="1.2" fill="#a8f050"/><circle cx="6.9" cy="4.5" r="2.0" fill="#86e030"/><circle cx="7.7" cy="19.8" r="1.8" fill="#98f038"/><circle cx="11.8" cy="24.3" r="1.8" fill="#7ae028"/><circle cx="13.4" cy="8.6" r="2.0" fill="#86e030"/><circle cx="25.6" cy="9.1" r="1.1" fill="#6ac820"/><circle cx="30.4" cy="8.3" r="2.0" fill="#7ae028"/><circle cx="3.2" cy="3.1" r="1.4" fill="#a8f050"/><circle cx="4.1" cy="10.5" r="1.5" fill="#2a5008"/><circle cx="10.4" cy="9.9" r="1.8" fill="#98f038"/><circle cx="18.8" cy="5.8" r="1.1" fill="#98f038"/><circle cx="14.8" cy="4.5" r="1.1" fill="#2a5008"/><circle cx="12.3" cy="11.1" r="1.1" fill="#7ae028"/><circle cx="7.4" cy="4.5" r="2.3" fill="#7ae028"/><circle cx="6.3" cy="19.9" r="1.0" fill="#7ae028"/><circle cx="3.4" cy="14.7" r="2.1" fill="#86e030"/><circle cx="12.7" cy="10.1" r="1.3" fill="#2a5008"/><circle cx="11.9" cy="6.7" r="2.0" fill="#7ae028"/><circle cx="18.0" cy="15.2" r="2.1" fill="#6ac820"/><circle cx="18.0" cy="4.1" r="2.0" fill="#a8f050"/><circle cx="4.3" cy="34.0" r="1.4" fill="#6ac820"/><circle cx="5.2" cy="17.1" r="1.4" fill="#7ae028"/><circle cx="4.4" cy="26.2" r="2.0" fill="#7ae028"/><circle cx="15.3" cy="2.6" r="1.4" fill="#6ac820"/><circle cx="21.1" cy="8.8" r="2.0" fill="#7ae028"/><circle cx="21.5" cy="6.4" r="1.7" fill="#3a7010"/><circle cx="13.9" cy="3.7" r="1.4" fill="#86e030"/><circle cx="31.1" cy="3.6" r="1.9" fill="#5ab820"/><circle cx="2.9" cy="5.5" r="1.3" fill="#2a5008"/><circle cx="9.2" cy="8.5" r="1.8" fill="#3a7010"/><circle cx="22.3" cy="4.0" r="1.4" fill="#86e030"/><circle cx="18.5" cy="2.1" r="1.1" fill="#3a7010"/><circle cx="5.8" cy="10.5" r="1.1" fill="#2a5008"/><circle cx="12.5" cy="4.2" r="2.0" fill="#5ab820"/><circle cx="4.4" cy="35.3" r="2.0" fill="#3a7010"/><circle cx="9.9" cy="19.2" r="1.8" fill="#86e030"/><circle cx="11.6" cy="19.0" r="2.2" fill="#a8f050"/><circle cx="11.7" cy="5.4" r="1.4" fill="#86e030"/><circle cx="2.7" cy="6.6" r="1.7" fill="#98f038"/><circle cx="20.2" cy="9.2" r="2.0" fill="#2a5008"/><circle cx="32.6" cy="3.4" r="2.1" fill="#5ab820"/><circle cx="17.7" cy="8.0" r="2.2" fill="#3a7010"/><circle cx="4.5" cy="17.4" r="2.1" fill="#7ae028"/><circle cx="10.1" cy="5.4" r="1.1" fill="#5ab820"/><circle cx="19.9" cy="14.3" r="2.0" fill="#98f038"/><circle cx="8.6" cy="5.0" r="1.8" fill="#5ab820"/><circle cx="28.7" cy="6.1" r="1.4" fill="#98f038"/><circle cx="14.5" cy="14.8" r="1.0" fill="#86e030"/><circle cx="4.5" cy="13.7" r="2.3" fill="#2a5008"/><circle cx="7.6" cy="2.1" r="1.4" fill="#5ab820"/><circle cx="13.8" cy="4.5" r="0.9" fill="#6ac820"/><circle cx="2.0" cy="7.5" r="1.4" fill="#98f038"/><circle cx="8.7" cy="22.0" r="2.0" fill="#5ab820"/><circle cx="8.8" cy="15.5" r="1.6" fill="#7ae028"/><circle cx="34.7" cy="2.3" r="1.9" fill="#98f038"/><circle cx="13.4" cy="4.1" r="2.3" fill="#86e030"/></g><g transform="translate(144,0)"><path d="M2,10 L9,2.5 L30,2.5 L41.5,17 L12,17 L12,37 L2,45 Z" fill="#f2f2f2" stroke="#8a8a8a" stroke-width="0.9" stroke-linejoin="round"/><path d="M12,17.3 L40,17.3" stroke="#555" stroke-width="1.4"/><path d="M3,11 L3,44" stroke="#777" stroke-width="1.2"/><path d="M13.5,3 L17,3 L21,8 L17.5,8 Z M19,3 L22.5,3 L26.5,8 L23,8 Z" fill="#4a4a4a"/><circle cx="7.5" cy="10.5" r="2" fill="none" stroke="#aaa" stroke-width="0.8"/><circle cx="32" cy="13" r="0.9" fill="#777"/><circle cx="7" cy="35" r="0.9" fill="#777"/></g><g transform="translate(192,0)"><rect x="4.5" y="4.5" width="16.5" height="17" fill="#b87028" stroke="#3a2008" stroke-width="1"/><circle cx="12.7" cy="12.5" r="3.6" fill="#9aa8c0"/><path d="M15.5,10 A3.6,3.6 0 0 1 11,16" stroke="#222" stroke-width="1.6" fill="none"/></g><g transform="translate(240,0)"><path d="M10.5,3.5 L13.5,8.5 L20.5,9 L16,13.5 L17.5,21 L11,17.5 L4.5,20.5 L6,13.5 L1.5,8.5 L7.5,8 Z" fill="#f0f048" stroke="#e8e040" stroke-width="1.6" stroke-linejoin="round"/><circle cx="11" cy="12.5" r="3.5" fill="#f8f890" opacity="0.7"/></g><g transform="translate(0,48)"><g stroke="#3a2e10" stroke-width="1.1"><path d="M26,4.5 Q33,6 29,13 Q24,20 18,22 Q12,26 12,31 Q11,36 7,33 Q2,28 6,22 Q10,16 16,13 Q20,5 26,4.5 Z" fill="#8a7440"/><circle cx="23.5" cy="9.5" r="4.8" fill="#e4cc88"/><circle cx="17.5" cy="19.5" r="3.8" fill="#d8c078"/><circle cx="9.5" cy="26.5" r="4.8" fill="#e0c880"/><circle cx="37.5" cy="11" r="2.8" fill="#f0e8c8"/><circle cx="8" cy="38.5" r="2.3" fill="#f0e8c8"/></g><circle cx="22.5" cy="8.5" r="2" fill="#f4e4a8"/><circle cx="8.5" cy="25.5" r="2" fill="#f4e4a8"/></g><g transform="translate(48,48)"><path d="M3.7,4.5 L30.7,4.5 Q27,9 20,11 Q13,14 10,22 Q7,30 3.7,33.7 Z" fill="#e8cc48"/><path d="M4.5,5 L12,5 L4.5,13 Z" fill="#f4e088" opacity="0.8"/><path d="M18,5 L30,5 Q26,9 18,11 Z" fill="#d0b040" opacity="0.8"/><circle cx="15.5" cy="9.5" r="2.3" fill="#181008"/><circle cx="8.3" cy="16" r="2.5" fill="#181008"/></g><g transform="translate(96,48)"><path d="M11,5 L35.6,5 L4.5,36.5 Q4,37 4,36 L4,12 Q4,5 11,5 Z" fill="#4a5028" stroke="#30361a" stroke-width="0.8"/><circle cx="12.5" cy="13.5" r="2" fill="#8a9070"/><circle cx="9.5" cy="25.5" r="2.4" fill="#f4f4e8"/></g><g transform="translate(144,48)"><defs><linearGradient id="gld" x1="0" y1="0" x2="0" y2="1"><stop offset="0" stop-color="#f0c830"/><stop offset="1" stop-color="#b08810"/></linearGradient><linearGradient id="gldv" x1="0" y1="0" x2="1" y2="0"><stop offset="0" stop-color="#f0c830"/><stop offset="1" stop-color="#a07808"/></linearGradient></defs><path d="M4.5,5 L37.6,5 L37.6,13.3 L12.8,13.3 L12.8,38.9 L4.5,38.9 Z" fill="url(#gldv)" stroke="#4a3800" stroke-width="1"/><path d="M13,5.5 L37,5.5 L37,13 L13,13 Z" fill="url(#gld)"/><path d="M5,5.5 L12.8,13.3" stroke="#8a6a08" stroke-width="0.9"/><path d="M30,6 L37,13" stroke="#8a6a08" stroke-width="0.6" opacity="0.6"/></g><g transform="translate(192,48)"><path d="M5,5.8 L10.5,5.6 L17,17.5 Q12,15 6,12 Z" fill="#e88070" stroke="#7a3a20" stroke-width="0.9" stroke-linejoin="round"/><path d="M7,8 L10,7.5 L10.5,11 Z" fill="#c02010"/><path d="M12,12 L16.5,17" stroke="#b89070" stroke-width="1.2"/></g><g transform="translate(240,48)"><path d="M4.6,5.7 L29.6,5.7 Q29,27 4.6,28.7 Z" fill="#4a1808" stroke="#f8d8b0" stroke-width="0.6"/><g stroke="#7a3418" stroke-width="0.8" fill="none"><circle cx="12" cy="13" r="3"/><circle cx="21" cy="11" r="2.5"/><circle cx="14" cy="21" r="2.5"/><path d="M20,17 q3,-2 5,1"/></g></g><g transform="translate(0,96)"><path d="M4.5,18 L12.4,6 L28,5.6 L31.5,9.5 L39.4,9.5 L39.4,18 L15.2,18 L15.2,33 L4.5,33 Z" fill="#1e1e1e" stroke="#0a0a0a" stroke-width="0.9" stroke-linejoin="round"/><path d="M6.5,18 L13,8 L27,8" stroke="#3a3a3a" stroke-width="1" fill="none"/><path d="M17,13 L38,13" stroke="#333" stroke-width="0.8"/></g><g transform="translate(48,96)"><defs><linearGradient id="mg" x1="0" y1="0" x2="0" y2="1"><stop offset="0" stop-color="#c850b8"/><stop offset="0.55" stop-color="#a058c8"/><stop offset="1" stop-color="#40c8e8"/></linearGradient></defs><path d="M4.3,5 L34.7,5 L34.7,18 L17,18 L17,35.4 L4.3,35.4 Z" fill="url(#mg)" stroke="#f0a0f0" stroke-width="0.8"/><path d="M9,10 L33,10 L33,15 L14,15 L14,34 L9,34 Z" fill="#100810"/><path d="M16,12.5 L32,12.5" stroke="#603060" stroke-width="2" stroke-dasharray="1,1"/><circle cx="11.5" cy="11" r="2.3" fill="#e860a8"/></g><g transform="translate(96,96)"><path d="M4,5 L38,5 L38,13.5 L13,13.5 L13,38.8 L4,38.8 Z" fill="#6a6a6a" stroke="#2a2a2a" stroke-width="1"/><path d="M5.5,7 L36.5,7 M5.5,7 L5.5,37" stroke="#d0d0d0" stroke-width="0.9"/><path d="M6,8 L22,8 L6,24 Z" fill="#4a4450" stroke="#e8e8e8" stroke-width="0.8"/><circle cx="11" cy="12" r="2.2" fill="#30d8e8"/></g><g transform="translate(144,96)"><path d="M5.7,6.1 L38.9,6.1 L38.9,17.6 L17.8,17.6 L17.8,39.9 L5.7,39.9 Z" fill="none" stroke="#a0f8ff" stroke-width="3" opacity="0.6"/><path d="M5.7,6.1 L38.9,6.1 L38.9,17.6 L17.8,17.6 L17.8,39.9 L5.7,39.9 Z" fill="#78f0fa" stroke="#50e8f8" stroke-width="1"/><path d="M8.5,8.5 L36.5,8.5 L36.5,15 L15.5,15 L15.5,37.5 L8.5,37.5 Z" fill="none" stroke="#e8ffff" stroke-width="1"/><path d="M11.5,13 L17,12.5 L13,14.5 L13,35 L11.5,35 Z" fill="#082028"/><rect x="26" y="11" width="7.5" height="2.2" fill="#082028"/></g><g transform="translate(192,96)"><g fill="none" stroke="#f8b8f4" stroke-width="3.2" opacity="0.8"><path d="M5.5,29 Q6,8 22,5"/><circle cx="24" cy="12.5" r="5.5"/><circle cx="11.9" cy="21.4" r="5.5"/><circle cx="32.3" cy="10" r="3.3"/><circle cx="9.3" cy="32.3" r="3.3"/></g><g stroke="#e848d0" stroke-width="1.5" fill="#f8a8f0"><path d="M5.5,29 Q6,8 22,5" fill="none"/><path d="M9,27 Q9,12 20,8" fill="none" stroke-width="1"/><circle cx="24" cy="12.5" r="5.5"/><circle cx="11.9" cy="21.4" r="5.5"/><circle cx="32.3" cy="10" r="3.3" fill="#fde8fd"/><circle cx="9.3" cy="32.3" r="3.3" fill="#fde8fd"/></g><circle cx="32.3" cy="10" r="1.2" fill="#e848d0"/><circle cx="9.3" cy="32.3" r="1.2" fill="#e848d0"/><path d="M22.5,10 L23.5,15 M25.5,10 L26,14" stroke="#e848d0" stroke-width="0.9"/><path d="M10,19.5 L14,20 M10,22.5 L14,23" stroke="#e848d0" stroke-width="0.9"/></g><g transform="translate(240,96)"><rect x="4.6" y="6" width="30" height="9.7" fill="#c88850" stroke="#5c3a12" stroke-width="0.9"/><rect x="5.3" y="15.7" width="9.5" height="17.8" fill="#c48a58" stroke="#5c3a12" stroke-width="0.9"/><path d="M8,17 L8,32 M11.5,17 L11.5,32" stroke="#a87040" stroke-width="0.6"/><circle cx="9" cy="10.6" r="2.5" fill="#6a3410"/><rect x="34.6" y="5.5" width="3.8" height="10.5" fill="#f6dc94" stroke="#4a3008" stroke-width="0.9"/><rect x="4.6" y="33.5" width="11.4" height="3.8" fill="#f6dc94" stroke="#4a3008" stroke-width="0.9"/></g></svg></div>
<div class="sb" style="left:1243px;top:158px;height:143px">
 <div class="sbb up" style="top:0"></div>
 <div class="thumb" style="top:17px;height:31px"></div>
 <div class="sbb dn" style="top:124px"></div>
</div>

<div id="tbox" class="abs"></div>
<div class="abs" style="left:949px;top:326px;color:#e8e8e8;font-size:14px;font-weight:bold">テーマ</div>
<div class="dd" style="left:1066px;top:348px;width:188px">全て</div>
<div class="abs" style="left:953px;top:382px;width:290px;height:149px;background:#3b3d40;border:1px solid #1c1e20;overflow:hidden"><svg width="288" height="147" style="position:absolute;left:0;top:0"><defs><pattern id="dia" width="8" height="8" patternUnits="userSpaceOnUse" x="2" y="1"><path d="M4,0 L8,4 L4,8 L0,4 Z" fill="#111"/></pattern><pattern id="woodS" width="40" height="40" patternUnits="userSpaceOnUse"><rect width="40" height="40" fill="#c09254"/><rect x="0" y="6" width="40" height="1" fill="#8a6430" opacity="0.35"/><rect x="0" y="15" width="40" height="1" fill="#8a6430" opacity="0.3"/><rect x="0" y="26" width="40" height="1" fill="#8a6430" opacity="0.35"/><rect x="0" y="34" width="40" height="1" fill="#e0b880" opacity="0.4"/></pattern></defs><g transform="translate(-954,-383)"><rect x="966" y="393" width="36" height="38" fill="#2a211c"/><rect x="962" y="390" width="40" height="3" fill="#d8b888"/><rect x="962" y="390" width="4" height="41" fill="#d4b080"/><path d="M963,391 L981,390.5 L963,408.5 Z" fill="#6a3412" stroke="#dcbc88" stroke-width="1.2"/><rect x="1013" y="392" width="37" height="39" fill="#141414"/><rect x="1024" y="388.5" width="26" height="3.5" fill="#3a4632"/><rect x="1010" y="405" width="3" height="26" fill="#8a8a88"/><circle cx="1014" cy="391" r="4" fill="#78d030"/><circle cx="1019" cy="393" r="3.5" fill="#90e040"/><circle cx="1012" cy="397" r="3.5" fill="#5aa820"/><circle cx="1013" cy="402" r="3" fill="#60b828"/><circle cx="1022" cy="389" r="2.5" fill="#80d838"/><circle cx="1017" cy="398" r="2" fill="#3a7010"/><circle cx="1026" cy="388.5" r="2" fill="#5a8a30" opacity="0.7"/><rect x="1061" y="396" width="37" height="35" fill="#161616"/><rect x="1072" y="393" width="26" height="3.5" fill="#f4f4f4"/><rect x="1057" y="400" width="4" height="31" fill="#e8e8e8"/><path d="M1056,392 L1060,387 L1062,390 L1064,387 L1066,390 L1068,387 L1073,393 L1073,397 L1062,397 L1061,410 L1057,412 Z" fill="#fafafa"/><rect x="1109" y="396" width="37" height="35" fill="#a86c14"/><rect x="1104" y="390" width="42" height="6" fill="#d88a2a"/><rect x="1104" y="390" width="5" height="41" fill="#d08428"/><rect x="1101.5" y="386.5" width="8.5" height="9.5" fill="#a86420" stroke="#5a3008" stroke-width="0.8"/><circle cx="1106" cy="391" r="1.5" fill="#4a2808"/><rect x="1152.5" y="390" width="41.5" height="41" fill="#68b8b0"/><path d="M1152.5,390.5 L1194,390.5" stroke="#f4a8c8" stroke-width="2" stroke-dasharray="4,3"/><path d="M1153.5,390 L1153.5,431" stroke="#f4a8c8" stroke-width="2" stroke-dasharray="4,3"/><path d="M1156,386 L1158.5,390 L1162,390.5 L1159.5,393.5 L1160.5,397.5 L1156.5,395.5 L1152.5,397.5 L1153,393.5 L1150.5,390.5 L1154,390 Z" fill="#f4e848" stroke="#f0e040" stroke-width="1.2" stroke-linejoin="round"/><rect x="1205" y="396" width="37" height="35" fill="#0e2a2a"/><rect x="1216" y="390" width="26" height="6" fill="#4a9a78"/><rect x="1216" y="391" width="26" height="1.5" fill="#8ad0b0"/><rect x="1201" y="405" width="4" height="26" fill="#7a7040"/><g stroke="#3a2e10" stroke-width="0.8"><circle cx="1213" cy="391" r="4" fill="#d8c078"/><circle cx="1208" cy="397" r="3.5" fill="#c8b068"/><circle cx="1204" cy="403" r="3.5" fill="#d8c078"/><circle cx="1218.5" cy="388" r="1.8" fill="#e8e0b8"/></g><rect x="964.5" y="441" width="37.5" height="38" fill="#10103a"/><rect x="960" y="437" width="42" height="4" fill="#e0b838"/><rect x="960" y="437" width="4" height="42" fill="#e0b838"/><rect x="964" y="441" width="1" height="38" fill="#8a2a10"/><rect x="965" y="441" width="37" height="1" fill="#8a2a10"/><path d="M960,437 L975,437 L975,441 L964,447 L960,447 Z" fill="#e8c040"/><circle cx="966" cy="439.5" r="1.5" fill="#181008"/><circle cx="962.5" cy="443" r="1.5" fill="#181008"/><rect x="1012" y="440" width="38" height="39" fill="#5a9a5e"/><path d="M1009,437 L1025,437 L1012,452 L1012,479 L1009,479 Z" fill="#4a5028"/><circle cx="1011.5" cy="447.5" r="1.9" fill="#f8f8f0"/><circle cx="1013" cy="441" r="1.2" fill="#9a9a80"/><rect x="1060" y="441" width="38" height="38" fill="#1c1c1c"/><rect x="1060" y="441" width="38" height="38" fill="url(#dia)"/><rect x="1057" y="437" width="41" height="4" fill="#e0b040"/><rect x="1057" y="437" width="3.5" height="42" fill="#e0b040"/><path d="M1057,437 L1073,437 L1073,443 L1063,443 L1063,452 L1057,452 Z" fill="#d8a020"/><rect x="1107" y="439.3" width="39.4" height="40" fill="#3a90b0"/><rect x="1107" y="439.3" width="2" height="40" fill="#1a4a60"/><path d="M1104,437 L1108,436 L1111,443 L1106,442 Z" fill="#f08080" stroke="#a04040" stroke-width="0.6"/><rect x="1155" y="439" width="39" height="40" fill="#2e0c06"/><rect x="1152.5" y="437" width="41.5" height="2.2" fill="#d8a868"/><rect x="1152.5" y="437" width="2.8" height="42" fill="#d8a868"/><path d="M1152.5,437 L1166,437 Q1166,450 1152.5,450.5 Z" fill="#4a1a08" stroke="#d8a868" stroke-width="1.1"/><rect x="1205" y="441" width="37" height="38" fill="#383838"/><rect x="1202" y="437" width="40" height="4" fill="#222"/><rect x="1202" y="437" width="3" height="42" fill="#222"/><rect x="965" y="490" width="37" height="37" fill="#2a2a2a"/><g fill="#222"><circle cx="970" cy="494" r="1"/><circle cx="970" cy="500" r="1"/><circle cx="970" cy="506" r="1"/><circle cx="970" cy="512" r="1"/><circle cx="970" cy="518" r="1"/><circle cx="970" cy="524" r="1"/><circle cx="976" cy="494" r="1"/><circle cx="976" cy="500" r="1"/><circle cx="976" cy="506" r="1"/><circle cx="976" cy="512" r="1"/><circle cx="976" cy="518" r="1"/><circle cx="976" cy="524" r="1"/><circle cx="982" cy="494" r="1"/><circle cx="982" cy="500" r="1"/><circle cx="982" cy="506" r="1"/><circle cx="982" cy="512" r="1"/><circle cx="982" cy="518" r="1"/><circle cx="982" cy="524" r="1"/><circle cx="988" cy="494" r="1"/><circle cx="988" cy="500" r="1"/><circle cx="988" cy="506" r="1"/><circle cx="988" cy="512" r="1"/><circle cx="988" cy="518" r="1"/><circle cx="988" cy="524" r="1"/><circle cx="994" cy="494" r="1"/><circle cx="994" cy="500" r="1"/><circle cx="994" cy="506" r="1"/><circle cx="994" cy="512" r="1"/><circle cx="994" cy="518" r="1"/><circle cx="994" cy="524" r="1"/><circle cx="1000" cy="494" r="1"/><circle cx="1000" cy="500" r="1"/><circle cx="1000" cy="506" r="1"/><circle cx="1000" cy="512" r="1"/><circle cx="1000" cy="518" r="1"/><circle cx="1000" cy="524" r="1"/></g><path d="M960,485 L977,485 L977,490 L965,490 L965,500 L960,500 Z" fill="none" stroke="#e050d0" stroke-width="1.6"/><path d="M961,495 L964,495 L964,499" stroke="#40c8e8" stroke-width="1.5" fill="none"/><rect x="977" y="485" width="10" height="4.5" fill="#40205a"/><rect x="989" y="485" width="8" height="4.5" fill="#50d0f0"/><rect x="997" y="485" width="5" height="4.5" fill="#e040c0"/><rect x="960" y="500" width="4.5" height="10" fill="#40205a"/><rect x="960" y="513" width="4.5" height="7" fill="#50d0f0"/><rect x="960" y="520" width="4.5" height="7" fill="#e040c0"/><rect x="1011.5" y="488" width="38.5" height="39" fill="#0e3c44"/><rect x="1011.5" y="490" width="38.5" height="0.6" fill="#0a2e34"/><rect x="1011.5" y="493" width="38.5" height="0.6" fill="#0a2e34"/><rect x="1011.5" y="496" width="38.5" height="0.6" fill="#0a2e34"/><rect x="1011.5" y="499" width="38.5" height="0.6" fill="#0a2e34"/><rect x="1011.5" y="502" width="38.5" height="0.6" fill="#0a2e34"/><rect x="1011.5" y="505" width="38.5" height="0.6" fill="#0a2e34"/><rect x="1011.5" y="508" width="38.5" height="0.6" fill="#0a2e34"/><rect x="1011.5" y="511" width="38.5" height="0.6" fill="#0a2e34"/><rect x="1011.5" y="514" width="38.5" height="0.6" fill="#0a2e34"/><rect x="1011.5" y="517" width="38.5" height="0.6" fill="#0a2e34"/><rect x="1011.5" y="520" width="38.5" height="0.6" fill="#0a2e34"/><rect x="1011.5" y="523" width="38.5" height="0.6" fill="#0a2e34"/><rect x="1011.5" y="526" width="38.5" height="0.6" fill="#0a2e34"/><rect x="1009" y="485" width="41" height="3" fill="#b8b8c0"/><rect x="1009" y="485" width="2.5" height="42" fill="#b0b0b8"/><path d="M1009,485 L1025,485 L1025,489 L1014,489 L1014,502 L1009,502 Z" fill="#909098"/><rect x="1060.5" y="489" width="37.5" height="38" fill="#0e3848"/><rect x="1060.5" y="491" width="37.5" height="0.6" fill="#1a5a70"/><rect x="1060.5" y="494" width="37.5" height="0.6" fill="#1a5a70"/><rect x="1060.5" y="497" width="37.5" height="0.6" fill="#1a5a70"/><rect x="1060.5" y="500" width="37.5" height="0.6" fill="#1a5a70"/><rect x="1060.5" y="503" width="37.5" height="0.6" fill="#1a5a70"/><rect x="1060.5" y="506" width="37.5" height="0.6" fill="#1a5a70"/><rect x="1060.5" y="509" width="37.5" height="0.6" fill="#1a5a70"/><rect x="1060.5" y="512" width="37.5" height="0.6" fill="#1a5a70"/><rect x="1060.5" y="515" width="37.5" height="0.6" fill="#1a5a70"/><rect x="1060.5" y="518" width="37.5" height="0.6" fill="#1a5a70"/><rect x="1060.5" y="521" width="37.5" height="0.6" fill="#1a5a70"/><rect x="1060.5" y="524" width="37.5" height="0.6" fill="#1a5a70"/><rect x="1062" y="489" width="0.6" height="38" fill="#1a5a70"/><rect x="1065" y="489" width="0.6" height="38" fill="#1a5a70"/><rect x="1068" y="489" width="0.6" height="38" fill="#1a5a70"/><rect x="1071" y="489" width="0.6" height="38" fill="#1a5a70"/><rect x="1074" y="489" width="0.6" height="38" fill="#1a5a70"/><rect x="1077" y="489" width="0.6" height="38" fill="#1a5a70"/><rect x="1080" y="489" width="0.6" height="38" fill="#1a5a70"/><rect x="1083" y="489" width="0.6" height="38" fill="#1a5a70"/><rect x="1086" y="489" width="0.6" height="38" fill="#1a5a70"/><rect x="1089" y="489" width="0.6" height="38" fill="#1a5a70"/><rect x="1092" y="489" width="0.6" height="38" fill="#1a5a70"/><rect x="1095" y="489" width="0.6" height="38" fill="#1a5a70"/><rect x="1057" y="485" width="41" height="4" fill="#50f0fc"/><rect x="1057" y="485" width="3.5" height="42" fill="#50f0fc"/><path d="M1057.5,485.5 L1075,485.5 L1075,491 L1066,491 L1066,503 L1057.5,503 Z" fill="none" stroke="#60f4ff" stroke-width="1.6"/><rect x="1107" y="488" width="39" height="39" fill="#4a0c24"/><rect x="1107" y="490" width="39" height="0.6" fill="#3a081c"/><rect x="1107" y="493" width="39" height="0.6" fill="#3a081c"/><rect x="1107" y="496" width="39" height="0.6" fill="#3a081c"/><rect x="1107" y="499" width="39" height="0.6" fill="#3a081c"/><rect x="1107" y="502" width="39" height="0.6" fill="#3a081c"/><rect x="1107" y="505" width="39" height="0.6" fill="#3a081c"/><rect x="1107" y="508" width="39" height="0.6" fill="#3a081c"/><rect x="1107" y="511" width="39" height="0.6" fill="#3a081c"/><rect x="1107" y="514" width="39" height="0.6" fill="#3a081c"/><rect x="1107" y="517" width="39" height="0.6" fill="#3a081c"/><rect x="1107" y="520" width="39" height="0.6" fill="#3a081c"/><rect x="1107" y="523" width="39" height="0.6" fill="#3a081c"/><rect x="1107" y="526" width="39" height="0.6" fill="#3a081c"/><rect x="1104" y="485.7" width="42" height="2.5" fill="#f488d8"/><rect x="1104" y="485.7" width="3" height="41.3" fill="#f488d8"/><g fill="#f8a0e8" stroke="#e050c8" stroke-width="0.9"><circle cx="1114" cy="489" r="3.2"/><circle cx="1108.5" cy="494" r="3.2"/><circle cx="1106.5" cy="500" r="2.2"/><circle cx="1120" cy="487" r="2"/></g><rect x="1201.2" y="485.7" width="40.8" height="41.3" fill="#d2d8d8"/><path d="M1205,497 L1242,497 M1205,509 L1242,509 M1205,521 L1242,521 M1222,488 L1222,497 M1232,497 L1232,509 M1214,509 L1214,521 M1236,509 L1236,521" stroke="#a8b0b0" stroke-width="0.8"/><rect x="1201.2" y="485.7" width="40.8" height="2.5" fill="#a8b4d0"/><rect x="1201.2" y="485.7" width="17" height="2.5" fill="#7080b8"/><rect x="1201.2" y="485.7" width="3.5" height="41.3" fill="#a8b4d0"/><path d="M1201.2,485.7 L1210,485.7 L1210,489 L1205,489 L1205,496 L1201.2,496 Z" fill="#6070b0"/><rect x="1148" y="481.3" width="44.2" height="43.4" fill="none" stroke="#ffffff" stroke-width="2.8"/><rect x="1150" y="483" width="41" height="41" fill="#1e1e1e"/><rect x="1151.8" y="484.4" width="38.5" height="38.5" fill="url(#woodS)"/><rect x="1170" y="484.4" width="20.3" height="7" fill="#7a5818"/><rect x="1151.8" y="484.4" width="18.5" height="7" fill="#d0a060"/><rect x="1151.8" y="484.4" width="5" height="16" fill="#c89050"/><rect x="1155" y="500" width="3" height="23" fill="#7a5818"/><rect x="1151.8" y="499" width="6" height="3" fill="#f0d890"/><rect x="1168.5" y="484.4" width="2" height="7.5" fill="#f0d890"/><rect x="1158" y="505" width="32" height="0.8" fill="#6a4a1c" opacity="0.6"/><rect x="1158" y="516" width="32" height="0.8" fill="#6a4a1c" opacity="0.6"/><rect x="1178" y="505" width="0.8" height="11" fill="#6a4a1c" opacity="0.6"/></g></svg></div>
<div class="sb" style="left:1243px;top:382px;height:149px">
 <div class="sbb up" style="top:0"></div>
 <div class="thumb" style="top:17px;height:35px"></div>
 <div class="sbb dn" style="top:130px"></div>
</div>

<div id="save" class="abs"><svg class="abs" style="left:15px;top:14px" width="32" height="32" viewBox="0 0 32 32">
<rect x="2" y="2" width="29" height="30" fill="#3a3a3c" rx="1"/>
<rect x="6" y="2.5" width="20" height="11" fill="#ececec"/>
<rect x="21" y="6" width="3" height="5" fill="#3a3a3c"/>
<rect x="6" y="17" width="20" height="4" fill="#8cc020"/>
<rect x="6" y="21" width="20" height="10" fill="#f4f4f4"/>
<rect x="6" y="25" width="20" height="0.8" fill="#ccc"/>
</svg></div>
</body></html>
